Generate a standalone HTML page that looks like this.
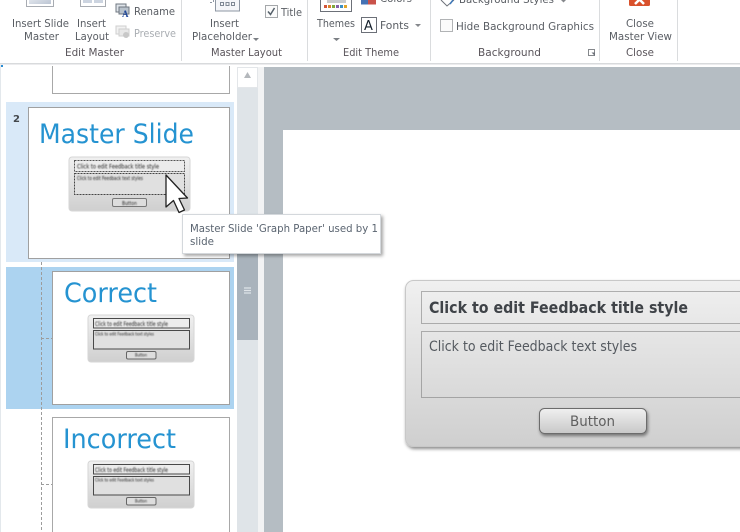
<!DOCTYPE html>
<html>
<head>
<meta charset="utf-8">
<style>
html,body{margin:0;padding:0;width:740px;height:532px;overflow:hidden;background:#fff}
svg{display:block}
text{font-family:"DejaVu Sans","Liberation Sans",sans-serif}
.r{font-size:11px;fill:#5a5e64}
.g{font-size:11px;fill:#5a555b}
</style>
</head>
<body>
<svg width="740" height="532" viewBox="0 0 740 532" xmlns="http://www.w3.org/2000/svg">
<defs>
<linearGradient id="fb" x1="0" y1="0" x2="0" y2="1"><stop offset="0" stop-color="#f0f0f0"/><stop offset="1" stop-color="#cfcfcf"/></linearGradient>
<linearGradient id="bt" x1="0" y1="0" x2="0" y2="1"><stop offset="0" stop-color="#f0f0f0"/><stop offset="1" stop-color="#c8c8c8"/></linearGradient>
<linearGradient id="ic" x1="0" y1="0" x2="1" y2="1"><stop offset="0" stop-color="#eef1f5"/><stop offset="1" stop-color="#bcc5d3"/></linearGradient>
<filter id="sh" x="-10%" y="-10%" width="120%" height="130%"><feDropShadow dx="1" dy="2" stdDeviation="1.5" flood-color="#000" flood-opacity=".45"/></filter>
<filter id="sh2" x="-10%" y="-20%" width="120%" height="150%"><feDropShadow dx="2" dy="2" stdDeviation="1.5" flood-color="#000" flood-opacity=".35"/></filter>
<filter id="b" x="-5%" y="-20%" width="110%" height="140%"><feGaussianBlur stdDeviation=".5"/></filter>
<filter id="b2" x="-5%" y="-5%" width="110%" height="110%"><feGaussianBlur stdDeviation=".3"/></filter>
</defs>

<!-- Ribbon -->
<rect width="740" height="63" fill="#fff"/>
<rect y="63" width="740" height="1.5" fill="#d8dadc"/>
<g fill="#dadcde">
<rect x="181" y="0" width="1" height="61"/><rect x="307" y="0" width="1" height="61"/><rect x="430" y="0" width="1" height="61"/><rect x="599" y="0" width="1" height="61"/><rect x="677" y="0" width="1" height="61"/>
</g>

<!-- Ribbon icons -->
<rect x="26.500" y="-6" width="27" height="12.500" fill="#fff" stroke="#a8acb2"/>
<rect x="29" y="-6" width="22" height="10" fill="url(#ic)"/>
<rect x="80.500" y="-6" width="25" height="12.500" fill="#fff" stroke="#a8acb2"/>
<rect x="83" y="0" width="9" height="3" fill="#ccd4e0"/><rect x="94" y="0" width="9" height="3" fill="#ccd4e0"/>
<rect x="116" y="4" width="10" height="8" fill="#dfe4ea" stroke="#6f7780"/>
<rect x="119" y="7" width="10" height="7" fill="#b8c2cc" stroke="#6f7780"/>
<text x="122" y="17" font-size="9" font-weight="bold" fill="#20479a" style="font-family:'Liberation Serif',serif">A</text>
<rect x="116" y="26" width="10" height="8" fill="#f2f2f2" stroke="#cfcfcf"/>
<rect x="119" y="29" width="10" height="7" fill="#e8e8e8" stroke="#cfcfcf"/>
<circle cx="126" cy="35" r="3" fill="#c8c8c8"/>

<rect x="215.500" y="-4" width="24" height="15" fill="#f4f6f9" stroke="#8e97a3"/>
<g fill="none" stroke="#7e8894"><rect x="220.500" y="2.500" width="3" height="3"/><rect x="226" y="2.500" width="3" height="3"/><rect x="231.500" y="2.500" width="3" height="3"/></g>
<path d="M210 2.500h3M213.500 0v3" stroke="#8e97a3" stroke-dasharray="2 1" fill="none"/>

<rect x="265.500" y="5.500" width="12" height="12" fill="#fbfbfb" stroke="#a4a7aa"/>
<path d="M268 11.500l2.500 3 4-6.500" stroke="#55606a" stroke-width="1.500" fill="none"/>
<rect x="440.500" y="19.500" width="12" height="12" fill="#fbfbfb" stroke="#b1b3b5"/>

<rect x="320.500" y="-4" width="31" height="15.500" fill="#fff" stroke="#6c7078"/>
<rect x="327" y="-3" width="19" height="6" fill="#c9cbcd"/>
<g><rect x="324" y="5" width="3" height="3" fill="#d3553b"/><rect x="328" y="5" width="3" height="3" fill="#d9822b"/><rect x="332" y="5" width="3" height="3" fill="#7fa83c"/><rect x="336" y="5" width="3" height="3" fill="#8560a8"/><rect x="340" y="5" width="3" height="3" fill="#3b8fc4"/><rect x="344" y="5" width="3" height="3" fill="#e0a52a"/></g>
<path d="M333 38h7l-3.500 3z" fill="#7b7f84"/>

<rect x="361" y="-6" width="7" height="10.500" fill="#4472b4"/><rect x="368" y="-6" width="8" height="10.500" fill="#c9524a"/>
<text x="380" y="2" class="r" textLength="32" lengthAdjust="spacingAndGlyphs">Colors</text>

<rect x="361.500" y="17.500" width="15" height="15" fill="#fff" stroke="#6c7078"/>
<text x="364" y="30" font-size="13" fill="#15202c">A</text>
<path d="M415 24h6l-3 3z" fill="#85888c"/>

<path d="M441 0l6 6 7-6" fill="#fff" stroke="#6c7078"/>
<path d="M450 4l3-4" stroke="#3f78b8" stroke-width="1.500"/>
<text x="459" y="3" class="r" textLength="95" lengthAdjust="spacingAndGlyphs">Background Styles</text>
<path d="M561 0h5l-2.500 2.500z" fill="#85888c"/>

<rect x="629" y="-6" width="21" height="12" rx="1.500" fill="#d9512c"/>
<path d="M635 -5l9 9M644 -5l-9 9" stroke="#fff" stroke-width="2.500"/>

<path d="M253 38h6l-3 3z" fill="#7b7f84"/>
<path d="M588.500 49.500h6v6h-6z" fill="none" stroke="#85888c"/>
<path d="M591 52l4 4v-3.500h-3.500z" fill="#6c7078"/>

<!-- Ribbon labels -->
<text x="12" y="27" class="r" textLength="57" lengthAdjust="spacingAndGlyphs">Insert Slide</text>
<text x="24" y="40" class="r" textLength="35" lengthAdjust="spacingAndGlyphs">Master</text>
<text x="77" y="27" class="r" textLength="29" lengthAdjust="spacingAndGlyphs">Insert</text>
<text x="75" y="40" class="r" textLength="34" lengthAdjust="spacingAndGlyphs">Layout</text>
<text x="134" y="15" class="r" textLength="41" lengthAdjust="spacingAndGlyphs">Rename</text>
<text x="134" y="37" class="r" style="fill:#a9adb2" textLength="42" lengthAdjust="spacingAndGlyphs">Preserve</text>
<text x="65" y="56" class="g" textLength="59" lengthAdjust="spacingAndGlyphs">Edit Master</text>
<text x="210" y="27" class="r" textLength="29" lengthAdjust="spacingAndGlyphs">Insert</text>
<text x="192" y="40" class="r" textLength="60" lengthAdjust="spacingAndGlyphs">Placeholder</text>
<text x="211" y="56" class="g" textLength="71" lengthAdjust="spacingAndGlyphs">Master Layout</text>
<text x="281" y="16" class="r" textLength="21" lengthAdjust="spacingAndGlyphs">Title</text>
<text x="317" y="27" class="r" textLength="38" lengthAdjust="spacingAndGlyphs">Themes</text>
<text x="380" y="29" class="r" textLength="29" lengthAdjust="spacingAndGlyphs">Fonts</text>
<text x="343" y="56" class="g" textLength="56" lengthAdjust="spacingAndGlyphs">Edit Theme</text>
<text x="456" y="30" class="r" textLength="138" lengthAdjust="spacingAndGlyphs">Hide Background Graphics</text>
<text x="478" y="56" class="g" textLength="63" lengthAdjust="spacingAndGlyphs">Background</text>
<text x="626" y="27" class="r" textLength="28" lengthAdjust="spacingAndGlyphs">Close</text>
<text x="609" y="40" class="r" textLength="63" lengthAdjust="spacingAndGlyphs">Master View</text>
<text x="626" y="56" class="g" textLength="28" lengthAdjust="spacingAndGlyphs">Close</text>

<!-- Left panel -->
<rect x="0" y="65" width="1" height="467" fill="#e3e8ec"/>
<rect x="1" y="65" width="2" height="2" fill="#2a8dd4"/>
<path d="M52.500 66V93.500H229.500V66" fill="#fff" stroke="#a8a8a8"/>

<rect x="6" y="102" width="228" height="160" fill="#d9e9f8"/>
<rect x="28.500" y="107.500" width="201" height="151" fill="#fff" stroke="#a0a0a0"/>
<text x="13" y="122" font-size="10" font-weight="bold" fill="#44484c" textLength="6">2</text>
<text x="39" y="143" font-size="27" fill="#2593d1" textLength="155" lengthAdjust="spacingAndGlyphs">Master Slide</text>

<rect x="6" y="267" width="228" height="142" fill="#acd3f0"/>
<rect x="52.500" y="271.500" width="177" height="133" fill="#fff" stroke="#a0a0a0"/>
<text x="64" y="302" font-size="27" fill="#2593d1" textLength="93" lengthAdjust="spacingAndGlyphs">Correct</text>

<rect x="52.500" y="417.500" width="177" height="130" fill="#fff" stroke="#a8a8a8"/>
<text x="63" y="448" font-size="27" fill="#2593d1" textLength="113" lengthAdjust="spacingAndGlyphs">Incorrect</text>

<path d="M41.500 262V532M41 338.500H52M41 484.500H52" stroke="#9c9c9c" stroke-dasharray="3 2" fill="none"/>

<!-- Mini 1 -->
<g filter="url(#b2)">
<rect x="69" y="157" width="121" height="54" rx="3" fill="url(#fb)" stroke="#d6d6d6"/>
<rect x="74.500" y="160.500" width="110" height="11" fill="#ececec" stroke="#555" stroke-dasharray="2 1"/>
<rect x="74.500" y="173.500" width="110" height="21" fill="#e0e0e0" stroke="#444" stroke-dasharray="2 1"/>
<rect x="112.500" y="198.500" width="34" height="8" rx="1.500" fill="#ddd" stroke="#777"/>
</g>
<g filter="url(#b)" fill="#222">
<text x="77" y="168.500" font-size="6" textLength="82" lengthAdjust="spacingAndGlyphs">Click to edit Feedback title style</text>
<text x="77" y="180" font-size="5.500" textLength="66" lengthAdjust="spacingAndGlyphs">Click to edit Feedback text styles</text>
<text x="122" y="205" font-size="5" textLength="15" lengthAdjust="spacingAndGlyphs">Button</text>
</g>

<!-- Mini 2 -->
<g filter="url(#b2)">
<rect x="88" y="315" width="106" height="47" rx="3" fill="url(#fb)" stroke="#d6d6d6"/>
<rect x="93.500" y="318.500" width="96" height="9.500" fill="#ececec" stroke="#4a4a4a"/>
<rect x="93.500" y="330.500" width="96" height="18.500" fill="#e0e0e0" stroke="#4a4a4a"/>
<rect x="126.500" y="351.500" width="29.500" height="7.500" rx="1.500" fill="#ddd" stroke="#666"/>
</g>
<g filter="url(#b)" fill="#222">
<text x="95" y="326" font-size="6" textLength="73" lengthAdjust="spacingAndGlyphs">Click to edit Feedback title style</text>
<text x="95" y="335.500" font-size="4" textLength="59" lengthAdjust="spacingAndGlyphs">Click to edit Feedback text styles</text>
<text x="135" y="356.500" font-size="4" textLength="12" lengthAdjust="spacingAndGlyphs">Button</text>
</g>
<!-- Mini 3 -->
<g filter="url(#b2)">
<rect x="88" y="461" width="106" height="47" rx="3" fill="url(#fb)" stroke="#d6d6d6"/>
<rect x="93.500" y="464.500" width="96" height="9.500" fill="#ececec" stroke="#4a4a4a"/>
<rect x="93.500" y="476.500" width="96" height="18.500" fill="#e0e0e0" stroke="#4a4a4a"/>
<rect x="126.500" y="497.500" width="29.500" height="7.500" rx="1.500" fill="#ddd" stroke="#666"/>
</g>
<g filter="url(#b)" fill="#222">
<text x="95" y="472" font-size="6" textLength="73" lengthAdjust="spacingAndGlyphs">Click to edit Feedback title style</text>
<text x="95" y="481.500" font-size="4" textLength="59" lengthAdjust="spacingAndGlyphs">Click to edit Feedback text styles</text>
<text x="135" y="502.500" font-size="4" textLength="12" lengthAdjust="spacingAndGlyphs">Button</text>
</g>

<!-- Scrollbar -->
<rect x="237" y="67" width="21" height="465" fill="#dfe4e8"/>
<rect x="258" y="67" width="6" height="465" fill="#f2f3f4"/>
<rect x="237.500" y="67.500" width="20" height="20" fill="#fff" stroke="#e3e6e9"/>
<path d="M244 78l3.500-6 3.500 6z" fill="#b4b8bc"/>
<rect x="237" y="251" width="21" height="89" fill="#a9b3bc"/>
<path d="M244 288h7M244 290.500h7M244 293h7" stroke="#dfe4e8" stroke-width="1.200"/>

<!-- Main area -->
<rect x="264" y="67" width="476" height="465" fill="#b5bdc3"/>
<rect x="283" y="130" width="457" height="402" fill="#fff"/>

<!-- Feedback -->
<rect x="405.500" y="280.500" width="345" height="166" rx="8" fill="url(#fb)" stroke="#c8c8c8" filter="url(#sh)"/>
<rect x="421.500" y="291.500" width="330" height="32" fill="none" stroke="#6e6e6e" stroke-dasharray="1 1"/>
<rect x="421.500" y="331.500" width="330" height="66" fill="none" stroke="#6e6e6e" stroke-dasharray="1 1"/>
<text x="429" y="313" font-size="16" font-weight="bold" fill="#3f4348" textLength="259" lengthAdjust="spacingAndGlyphs">Click to edit Feedback title style</text>
<text x="429" y="351" font-size="14" fill="#555a60" textLength="208" lengthAdjust="spacingAndGlyphs">Click to edit Feedback text styles</text>
<rect x="539.500" y="408.500" width="107" height="25" rx="5" fill="url(#bt)" stroke="#6c6c6c" filter="url(#sh)"/>
<text x="570" y="426" font-size="14" fill="#5f5f5f" textLength="45" lengthAdjust="spacingAndGlyphs">Button</text>

<!-- Cursor -->
<path d="M166 175V207L173.500 200.500L179 212.500L184.500 210L179 198.500L187.500 198Z" fill="#fff" stroke="#222" stroke-width="1.300" stroke-linejoin="round"/>

<!-- Tooltip -->
<rect x="182.500" y="214.500" width="198" height="39" fill="#fff" stroke="#d4d8dc" filter="url(#sh2)"/>
<text x="190" y="232" font-size="11" fill="#5a6470" textLength="188" lengthAdjust="spacingAndGlyphs">Master Slide 'Graph Paper' used by 1</text>
<text x="190" y="245" font-size="11" fill="#5a6470" textLength="24" lengthAdjust="spacingAndGlyphs">slide</text>
</svg>
</body>
</html>
